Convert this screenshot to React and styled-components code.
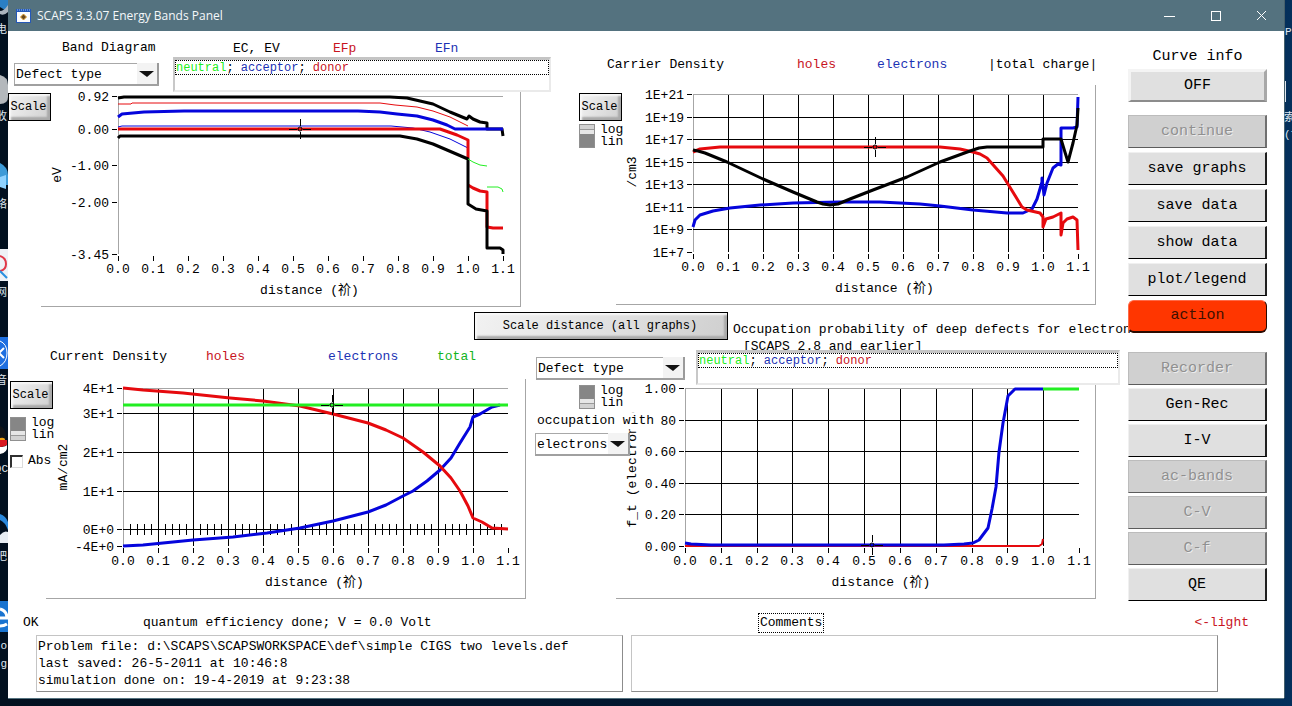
import React from "react";
import styled, { createGlobalStyle, css } from "styled-components";

// Colors declaration
const colors = {
  titleBar: "#54727f",
  line: "#a6a6a6",
  black: "#000000",
  red: "#e60a0e",
  blue: "#0505dc",
  green: "#22ee22",
  textRed: "#c8141e",
  textBlue: "#1c32b4",
  textGreen: "#14b41e",
  face: "#e0e0e0",
  dimmed: "#d0d0d0"
};

const mono = `"Liberation Mono", "Noto Sans CJK SC", monospace`;

const GlobalStyle = createGlobalStyle`
  * {
    box-sizing: border-box;
  }
  body {
    margin: 0;
    background: #021a38;
    font-family: ${mono};
    font-size: 13px;
    line-height: 16px;
    color: ${colors.black};
  }
  button, select, textarea, input {
    font: inherit;
    color: inherit;
    margin: 0;
    border-radius: 0;
  }
`;

// Desktop and window
const Desktop = styled.div`
  display: grid;
  grid-template-columns: 8px minmax(0, 1fr) 8px;
  min-height: 100vh;
  padding-bottom: 7px;
  background: linear-gradient(90deg, #02101f, #021c3a 80%, #04305c);
`;

const Strip = styled.svg`
  display: block;
  width: 8px;
  height: 698px;
  overflow: hidden;
`;

const Window = styled.div`
  display: flex;
  flex-direction: column;
  background: #ffffff;
  border-bottom: 1px solid ${colors.titleBar};
`;

const TitleBar = styled.header`
  display: flex;
  align-items: center;
  height: 31px;
  padding-left: 8px;
  background: ${colors.titleBar};
  color: #f4f8fa;
  font-family: "Open Sans", "Noto Sans", sans-serif;
  font-size: 12px;
`;

const TitleText = styled.span`
  flex: 1;
  margin-left: 6px;
`;

const WindowButton = styled.button`
  display: flex;
  align-items: center;
  justify-content: center;
  width: 46px;
  height: 31px;
  padding: 0;
  border: 0;
  background: none;
  color: #ffffff;
`;

const Body = styled.div`
  display: flex;
`;

const Main = styled.main`
  flex: 1;
  min-width: 0;
`;

const Row = styled.div`
  display: grid;
  grid-template-columns: ${p => p.$cols};
`;

const DistanceRow = styled(Row)`
  height: 41px;
`;

// Chart panels
const PanelHead = styled.div`
  display: flex;
  height: ${p => p.$height}px;
`;

const TitleColumn = styled.div`
  display: flex;
  flex-direction: column;
  gap: 7px;
  width: 165px;
  padding: 9px 0 0 6px;
`;

const PanelTitle = styled.h2`
  margin: 0;
  padding-left: ${p => p.$indent || 0}px;
  font-size: 13px;
  font-weight: normal;
  white-space: nowrap;
`;

const LegendColumn = styled.div`
  width: 378px;
  padding-top: 10px;
`;

const Legend = styled.div`
  display: grid;
  grid-template-columns: ${p => p.$cols};
  align-content: start;
  padding: ${p => p.$pad};
  white-space: nowrap;
`;

const DistanceTitle = styled(Legend)`
  line-height: 17px;
`;

const Ink = styled.span`
  color: ${p => p.$color};
`;

const PanelBody = styled.div`
  display: flex;
`;

const Tools = styled.div`
  position: relative;
  z-index: 1;
  display: flex;
  flex: none;
  flex-direction: column;
  align-items: flex-start;
  gap: ${p => p.$gap}px;
  width: ${p => p.$width}px;
  height: 0;
  padding: ${p => p.$pad};
`;

const Plot = styled.svg`
  display: block;
  flex: none;
  border-right: 1px solid ${colors.line};
  border-bottom: 1px solid ${colors.line};
  font-family: ${mono};
  font-size: 13px;
`;

// Controls
const GlossButton = styled.button`
  flex: none;
  width: ${p => p.$width || "43px"};
  height: 28px;
  margin-top: ${p => p.$top || 0}px;
  padding: 0 2px 0 0;
  border: 1px solid ${colors.black};
  background: linear-gradient(120deg, #f2f2f2, #dedede 60%, #cfcfcf);
  box-shadow: inset 2px 2px 2px #f8f8f8, inset -3px -3px 2px #a9a9a9;
  font-size: 12px;
`;

const ComboBox = styled.div`
  position: relative;
  flex: none;
  width: ${p => p.$width}px;
  height: 23px;
  border-bottom: 2px solid #a0a0a0;
  background: #ffffff;

  select {
    width: calc(100% - 22px);
    height: 21px;
    padding: 1px 0 0 1px;
    border: 1px solid #a8a8a8;
    border-right: 0;
    border-bottom: 0;
    background: #ffffff;
    appearance: none;
  }
  svg {
    position: absolute;
    top: 0;
    right: 0;
    pointer-events: none;
    background: #f3f3f3;
    border-right: 2px solid #9a9a9a;
  }
`;

const ListBox = styled.div`
  position: relative;
  z-index: 1;
  flex: none;
  width: ${p => p.$width}px;
  height: 35px;
  border: 2px solid #eaeaea;
  border-top: 3px solid #c4c4c4;
  border-left-color: #c8c8c8;
  background: #ffffff;
  font-size: 12px;
  line-height: 14px;
`;

const ListRow = styled.div`
  height: 15px;
  border: 1px dotted ${colors.black};
  white-space: pre;
`;

const SwitchBox = styled.button`
  display: flex;
  gap: 5px;
  margin-left: ${p => p.$indent || 0}px;
  padding: 0;
  border: 0;
  background: none;
  text-align: left;
  line-height: 12px;
`;

const Knob = styled.span`
  width: 16px;
  height: 24px;
  border: 1px solid #909090;
  background: linear-gradient(
    ${p => (p.$up ? "0deg" : "180deg")},
    #868686 13px,
    #e6e6e6 13px,
    #e6e6e6 17px,
    #9a9a9a 17px,
    #9a9a9a 18px,
    #d2d2d2 18px
  );
`;

const CheckLabel = styled.label`
  display: flex;
  align-items: center;
  gap: 5px;
  margin-top: 4px;

  input {
    width: 13px;
    height: 13px;
    border: 1px solid #dcdcdc;
    border-top: 2px solid #303030;
    border-left: 2px solid #303030;
    background: #ffffff;
    appearance: none;
  }
`;

const Caption = styled.label`
  margin-left: 2px;
  padding-right: 6px;
  background: #ffffff;
  white-space: nowrap;
`;

// Right hand button column
const Sidebar = styled.aside`
  position: relative;
  z-index: 2;
  width: 156px;
  padding: 18px 17px 0 0;
  font-size: 15px;
`;

const SidebarTitle = styled.div`
  margin-bottom: 4px;
  text-align: center;
`;

const ButtonGroup = styled.div`
  display: grid;
  gap: ${p => p.$gap}px;
  margin-bottom: ${p => p.$after}px;
`;

const raised = css`
  border: 3px solid #f4f4f4;
  border-right-color: #a8a8a8;
  border-bottom: 2px solid #8c8c8c;
`;

const action = css`
  border: 1px solid #2a0a00;
  border-top-color: #ff6a48;
  border-left-color: #ff6a48;
  border-bottom-width: 2px;
  border-radius: 6px;
  background: #ff3600;
  color: #401000;
`;

const SideButton = styled.button`
  height: 33px;
  padding: 0;
  border: 1px solid #f0f0f0;
  border-right: 2px solid #202020;
  border-bottom: 1px solid ${colors.black};
  background: ${colors.face};

  &:disabled {
    border-color: #bcbcbc #707070 #5c5c5c #bcbcbc;
    background: ${colors.dimmed};
    color: #909090;
    text-shadow: 1px 1px 0 #ececec;
  }
  ${p => p.$kind === "raised" && raised}
  ${p => p.$kind === "action" && action}
`;

// Bottom area
const Footer = styled.footer`
  padding: 12px 0 5px;
`;

const Status = styled.div`
  display: grid;
  grid-template-columns: 120fr 615fr 491fr;
  align-items: center;
  height: 20px;
  padding: 0 35px 0 15px;
`;

const StatusEnd = styled.div`
  display: flex;
  align-items: center;
  justify-content: space-between;
`;

const CommentsLabel = styled.label`
  padding: 1px;
  border: 1px dotted ${colors.black};
`;

const Boxes = styled.div`
  display: grid;
  grid-template-columns: 1fr 1fr;
  gap: 8px;
  padding: 2px 66px 0 28px;
`;

const TextBox = styled.textarea`
  display: block;
  width: 100%;
  height: 57px;
  padding: 2px 1px;
  border: 1px solid #c4c4c4;
  border-right-color: #8c8c8c;
  border-bottom-color: #8c8c8c;
  line-height: 17px;
  overflow: hidden;
  resize: none;
`;

const xLabels = [
  "0.0", "0.1", "0.2", "0.3", "0.4", "0.5",
  "0.6", "0.7", "0.8", "0.9", "1.0", "1.1"
];

// Curves are polylines measured from the top left corner of the plot area
const bandCurves = [
  ["black", 3, "0,2 6,1 272,1 289,2 302,5 315,8 332,16 349,23 351,20 355,23 362,26 369,27 369,33 384,33 385,40"],
  ["red", 1, "0,8 13,8 14,7 262,7 277,9 299,11 315,15 332,21 350,30"],
  ["blue", 1, "0,31 4,30 273,30 295,32 312,36 332,43 350,52"],
  ["red", 3, "0,33 322,33 339,39 350,44 350,62"],
  ["blue", 3, "0,21 4,18 15,17 26,16 66,15 240,15 262,16 279,18 299,20 315,24 329,29 337,33 385,33"],
  ["red", 3, "350,89 355,92 362,95 369,96 369,131 375,132 385,132"],
  ["black", 3, "0,42 2,40 282,40 299,43 315,48 329,54 350,63 350,108 358,113 369,115 369,152 382,152 385,154 385,158"],
  ["green", 1, "350,63 355,66 362,69 369,70"],
  ["green", 1, "369,91 380,91 384,93 385,96"]
];

const carrierCurves = [
  ["blue", 3, "0,133 2,126 7,121 20,117 37,114 67,111 100,109 147,108 187,108 227,110 247,112 280,116 314,119 330,119 339,115 344,105 349,88 349,84 351,101 354,89 360,74 365,70 368,71 368,34 380,34 384,33 385,3"],
  ["red", 3, "0,58 7,55 27,53 247,53 267,55 280,58 287,60 294,64 302,73 310,82 318,95 329,113 334,116 347,119 350,123 350,133 353,125 360,123 368,119 368,141 370,129 374,125 380,123 384,126 385,156"],
  ["black", 3, "0,56 5,57 12,59 34,68 70,85 100,98 124,108 130,110 137,111 145,110 157,105 180,96 214,83 247,68 277,57 286,54 294,53 350,53 350,45 368,45 371,55 375,68 380,49 384,31 385,14"]
];

const currentCurves = [
  ["blue", 3, "0,158 20,157 70,152 110,149 144,145 177,140 210,133 245,124 263,117 280,108 290,103 304,93 317,82 328,70 337,55 347,39 350,29 357,26 369,19 377,17"],
  ["red", 3, "0,0 20,2 60,5 107,10 140,13 177,18 210,26 245,35 263,42 280,50 300,64 317,78 328,90 337,103 345,118 350,130 359,134 369,140 385,141"],
  ["green", 3, "0,17 385,17"]
];

const occupationCurves = [
  ["red", 2, "0,158 354,158 357,156 358,151"],
  ["blue", 3, "0,155 6,156 26,157 259,157 279,156 288,155 294,152 303,140 307,121 311,99 314,64 318,35 323,8 330,1 358,1"],
  ["green", 3, "358,1 394,1"]
];

const Chart = ({
  name, height, left, top, width, yTicks, unit, unitX, unitY, curves, cursor,
  grid, minorAt
}) => {
  const step = i => Math.round((i * width) / 11);
  const bottom = 158;

  return (
    <Plot width="480" height={height} role="img" aria-label={name}>
      <g transform={`translate(${left} ${top})`}>
        <path
          d={`M0,${bottom}V0H${width}`}
          fill="none"
          stroke={colors.line}
          shapeRendering="crispEdges"
        />
        {xLabels.map((label, i) => (
          <g key={label}>
            {grid && i > 0 && i < 11 && (
              <path
                d={`M${step(i)},1V${bottom}`}
                stroke="#000"
                shapeRendering="crispEdges"
              />
            )}
            <path
              d={`M${step(i)},${bottom + 2}v5`}
              stroke="#000"
              shapeRendering="crispEdges"
            />
            <text x={step(i)} y={bottom + 19} textAnchor="middle">
              {label}
            </text>
          </g>
        ))}
        {yTicks.map(([label, y]) => (
          <g key={label}>
            {grid && y > 0 && y < bottom && (
              <path
                d={`M0,${y}H${width}`}
                stroke="#000"
                shapeRendering="crispEdges"
              />
            )}
            <path d={`M-6,${y}h5`} stroke="#000" shapeRendering="crispEdges" />
            <text x="-9" y={y + 5} textAnchor="end">
              {label}
            </text>
          </g>
        ))}
        {minorAt && (
          <path
            d={Array.from(
              { length: 54 },
              (_, i) => `M${(i + 1) * 7},${minorAt - 5}v11`
            ).join("")}
            stroke="#000"
            shapeRendering="crispEdges"
          />
        )}
        {curves.map(([color, weight, points], i) => (
          <polyline
            key={i}
            points={points}
            fill="none"
            stroke={colors[color]}
            strokeWidth={weight}
            strokeLinejoin="round"
          />
        ))}
        <g transform={`translate(${cursor})`} stroke="#000" fill="none">
          <path d="M-11,0h8M3,0h8M0,-10v7M0,3v7" shapeRendering="crispEdges" />
          <circle r="2" />
        </g>
        <text x={width / 2 - 1} y={bottom + 40} textAnchor="middle">
          distance (祄)
        </text>
      </g>
      <text
        transform={`translate(${unitX} ${unitY}) rotate(-90)`}
        textAnchor="middle"
      >
        {unit}
      </text>
    </Plot>
  );
};

const Combo = ({ width, label, id, options }) => (
  <ComboBox $width={width}>
    <select id={id} aria-label={label}>
      {options.map(option => (
        <option key={option}>{option}</option>
      ))}
    </select>
    <svg width="22" height="21" viewBox="0 0 20 21" aria-hidden="true">
      <path d="M2,8h15l-7,6z" fill="#111" />
    </svg>
  </ComboBox>
);

const DefectList = ({ width }) => (
  <ListBox $width={width} role="listbox" aria-label="Defect type legend">
    <ListRow role="option">
      <Ink $color={colors.green}>neutral</Ink>;{" "}
      <Ink $color={colors.textBlue}>acceptor</Ink>;{" "}
      <Ink $color={colors.textRed}>donor</Ink>
    </ListRow>
  </ListBox>
);

const LogSwitch = ({ log, indent }) => (
  <SwitchBox type="button" role="switch" aria-checked={!!log} $indent={indent}>
    <Knob $up={log} />
    <span>
      log
      <br />
      lin
    </span>
  </SwitchBox>
);

const LeftDesktop = () => (
  <Strip aria-hidden="true" fontSize="11" fill="#dfe6ee">
    <path d="M0,0h8v11q-4,-1 -8,-4z" fill="#2b7fc4" />
    <path d="M0,11q4,0 8,-6v7q-4,4 -8,2z" fill="#aab4be" />
    <path d="M0,75q8,2 8,10v12q0,7 -8,7z" fill="#b4b8bc" />
    <path d="M0,163q8,4 8,12v10h-8z" fill="#3d9bd8" />
    <path d="M0,177l6,-2v14l-6,-2z" fill="#8fd2ff" />
    <path d="M0,249h8v32h-8z" fill="#eef2f6" />
    <path d="M0,256q6,2 6,8t-6,7" fill="none" stroke="#e03848" strokeWidth="2" />
    <path d="M0,271l7,7" stroke="#2a90e0" strokeWidth="2" />
    <path d="M0,337h8v32h-8z" fill="#1e6fe0" />
    <path d="M0,341q7,3 7,12t-7,13" fill="none" stroke="#fff" />
    <path d="M-1,353l5,-5M-1,353l5,5" fill="none" stroke="#fff" strokeWidth="2" />
    <path d="M0,426q6,2 6,12v8q0,8 -6,8z" fill="#101418" />
    <path d="M0,438q5,-1 5,2h-5z" fill="#f0a010" />
    <path d="M0,440h7v5q-3,2 -7,2z" fill="#d81820" />
    <path d="M0,447q5,0 7,-2q1,8 -7,9z" fill="#fff" />
    <path d="M0,514q6,2 8,8v8q-3,-8 -8,-10z" fill="#2a88dc" />
    <path d="M0,535q4,-5 8,-3v11h-8z" fill="#e8eef4" />
    <path d="M0,601h8v31h-8z" fill="#1a74d0" />
    <path d="M0,609q7,2 7,9h-7M0,626q4,0 7,-2" fill="none" stroke="#fff" strokeWidth="3" />
    <text x="7" y="33" textAnchor="end">电</text>
    <text x="7" y="120" textAnchor="end">收</text>
    <text x="7" y="208" textAnchor="end">络</text>
    <text x="7" y="296" textAnchor="end">网</text>
    <text x="7" y="384" textAnchor="end">音</text>
    <text x="8" y="472" textAnchor="end">QC</text>
    <text x="7" y="560" textAnchor="end">吧</text>
    <text x="7" y="649" textAnchor="end">o</text>
    <text x="7" y="667" textAnchor="end">g</text>
  </Strip>
);

const RightDesktop = () => (
  <Strip aria-hidden="true" fontSize="11" fill="#dfe6ee">
    <path d="M0,0h1v698h-1z" fill="#46606c" />
    <path d="M1,81h1v21h-1z" fill="#dfe6ee" />
    <text x="1" y="35">P</text>
    <text x="0" y="121">索</text>
    <text x="0" y="138">(7</text>
  </Strip>
);

// Main component
const App = () => (
  <>
    <GlobalStyle />
    <Desktop>
      <LeftDesktop />
      <Window>
        <TitleBar>
          <svg width="15" height="14" aria-hidden="true">
            <rect width="15" height="14" fill="#2458b8" />
            <rect x="1" y="3" width="13" height="10" fill="#fdfdfd" />
            <path d="M1,1h13" stroke="#9cc4f4" strokeDasharray="1 1" />
            <path d="M7.500,5l3,3l-3,3l-3,-3z" fill="#6a4a20" stroke="#e0a030" />
          </svg>
          <TitleText>SCAPS 3.3.07 Energy Bands Panel</TitleText>
          <WindowButton type="button" aria-label="Minimize">
            <svg width="11" height="11" stroke="currentColor" shapeRendering="crispEdges">
              <path d="M0,6h11" />
            </svg>
          </WindowButton>
          <WindowButton type="button" aria-label="Maximize">
            <svg width="11" height="11" stroke="currentColor" fill="none" shapeRendering="crispEdges">
              <path d="M1,1h9v9h-9z" />
            </svg>
          </WindowButton>
          <WindowButton type="button" aria-label="Close">
            <svg width="11" height="11" stroke="currentColor">
              <path d="M1,1l9,9M10,1l-9,9" />
            </svg>
          </WindowButton>
        </TitleBar>
        <Body>
          <Main>
            <Row $cols="minmax(0, 563fr) minmax(0, 557fr)">
              <section>
                <PanelHead $height={60}>
                  <TitleColumn>
                    <PanelTitle $indent={48}>Band Diagram</PanelTitle>
                    <Combo width={145} label="Band defect type" options={["Defect type"]} />
                  </TitleColumn>
                  <LegendColumn>
                    <Legend $cols="100px 102px 1fr" $pad="0 0 0 60px">
                      <span>EC, EV</span>
                      <Ink $color={colors.textRed}>EFp</Ink>
                      <Ink $color={colors.textBlue}>EFn</Ink>
                    </Legend>
                    <DefectList width={378} />
                  </LegendColumn>
                </PanelHead>
                <PanelBody>
                  <Tools $width={33} $gap={4} $pad="2px 0 0">
                    <GlossButton type="button">Scale</GlossButton>
                  </Tools>
                  <Chart
                    name="Band Diagram"
                    height={216}
                    left={77}
                    top={5}
                    width={385}
                    yTicks={[["0.92", 0], ["0.00", 33], ["-1.00", 69], ["-2.00", 106], ["-3.45", 158]]}
                    unit="eV"
                    unitX={20}
                    unitY={84}
                    curves={bandCurves}
                    cursor="182 33"
                  />
                </PanelBody>
              </section>
              <section>
                <Legend $cols="190px 80px 111px 1fr" $pad="26px 0 12px 36px">
                  <PanelTitle>Carrier Density</PanelTitle>
                  <Ink $color={colors.textRed}>holes</Ink>
                  <Ink $color={colors.textBlue}>electrons</Ink>
                  <span>|total charge|</span>
                </Legend>
                <PanelBody>
                  <Tools $width={45} $gap={3} $pad="8px 0 0 8px">
                    <GlossButton type="button">Scale</GlossButton>
                    <LogSwitch log />
                  </Tools>
                  <Chart
                    name="Carrier Density"
                    height={220}
                    left={77}
                    top={9}
                    width={385}
                    yTicks={[
                      ["1E+21", 0], ["1E+19", 23], ["1E+17", 45], ["1E+15", 68],
                      ["1E+13", 90], ["1E+11", 113], ["1E+9", 135], ["1E+7", 158]
                    ]}
                    unit="/cm3"
                    unitX={20}
                    unitY={87}
                    curves={carrierCurves}
                    cursor="182 53"
                    grid
                  />
                </PanelBody>
              </section>
            </Row>
            <DistanceRow $cols="minmax(0, 466fr) minmax(0, 254fr) minmax(0, 400fr)">
              <span />
              <GlossButton type="button" $width="100%" $top={5}>
                Scale distance (all graphs)
              </GlossButton>
              <DistanceTitle $cols="1fr" $pad="14px 0 0 5px">
                <PanelTitle>Occupation probability of deep defects for electrons</PanelTitle>
                <PanelTitle $indent={10}>[SCAPS 2.8 and earlier]</PanelTitle>
              </DistanceTitle>
            </DistanceRow>
            <Row $cols="minmax(0, 527fr) minmax(0, 593fr)">
              <section>
                <Legend $cols="156px 122px 109px 1fr" $pad="1px 0 14px 42px">
                  <PanelTitle>Current Density</PanelTitle>
                  <Ink $color={colors.textRed}>holes</Ink>
                  <Ink $color={colors.textBlue}>electrons</Ink>
                  <Ink $color={colors.textGreen}>total</Ink>
                </Legend>
                <PanelBody>
                  <Tools $width={38} $gap={8} $pad="2px 0 0 2px">
                    <GlossButton type="button">Scale</GlossButton>
                    <LogSwitch />
                    <CheckLabel>
                      <input type="checkbox" />
                      Abs
                    </CheckLabel>
                  </Tools>
                  <Chart
                    name="Current Density"
                    height={220}
                    left={77}
                    top={9}
                    width={385}
                    yTicks={[["4E+1", 0], ["3E+1", 25], ["2E+1", 64], ["1E+1", 103], ["0E+0", 141], ["-4E+0", 158]]}
                    unit="mA/cm2"
                    unitX={21}
                    unitY={88}
                    curves={currentCurves}
                    cursor="209 17"
                    minorAt={141}
                    grid
                  />
                </PanelBody>
              </section>
              <section>
                <PanelHead $height={34}>
                  <Legend $cols="160px auto" $pad="2px 0 0 1px">
                    <Legend $cols="auto" $pad="7px 0 0">
                      <Combo width={149} label="Occupation defect type" options={["Defect type"]} />
                    </Legend>
                    <DefectList width={424} />
                  </Legend>
                </PanelHead>
                <PanelBody>
                  <Tools $width={81} $gap={4} $pad="3px 0 0">
                    <LogSwitch indent={44} />
                    <Caption htmlFor="occupation">occupation with</Caption>
                    <Combo id="occupation" width={95} label="occupation with" options={["electrons", "holes"]} />
                  </Tools>
                  <Chart
                    name="Occupation probability"
                    height={217}
                    left={69}
                    top={6}
                    width={394}
                    yTicks={[["1.00", 0], ["0.80", 32], ["0.60", 63], ["0.40", 95], ["0.20", 126], ["0.00", 158]]}
                    unit="f_t (electrons)"
                    unitX={20}
                    unitY={87}
                    curves={occupationCurves}
                    cursor="187 157"
                    grid
                  />
                </PanelBody>
              </section>
            </Row>
          </Main>
          <Sidebar>
            <SidebarTitle>Curve info</SidebarTitle>
            <ButtonGroup $gap={4} $after={13}>
              <SideButton type="button" $kind="raised">OFF</SideButton>
            </ButtonGroup>
            <ButtonGroup $gap={4} $after={19}>
              <SideButton type="button" disabled>continue</SideButton>
              <SideButton type="button">save graphs</SideButton>
              <SideButton type="button">save data</SideButton>
              <SideButton type="button">show data</SideButton>
              <SideButton type="button">plot/legend</SideButton>
              <SideButton type="button" $kind="action">action</SideButton>
            </ButtonGroup>
            <ButtonGroup $gap={3} $after={0}>
              <SideButton type="button" disabled>Recorder</SideButton>
              <SideButton type="button">Gen-Rec</SideButton>
              <SideButton type="button">I-V</SideButton>
              <SideButton type="button" disabled>ac-bands</SideButton>
              <SideButton type="button" disabled>C-V</SideButton>
              <SideButton type="button" disabled>C-f</SideButton>
              <SideButton type="button">QE</SideButton>
            </ButtonGroup>
          </Sidebar>
        </Body>
        <Footer>
          <Status>
            <span>OK</span>
            <span>quantum efficiency done; V = 0.0 Volt</span>
            <StatusEnd>
              <CommentsLabel htmlFor="comments">Comments</CommentsLabel>
              <Ink $color={colors.textRed}>&lt;-light</Ink>
            </StatusEnd>
          </Status>
          <Boxes>
            <TextBox
              readOnly
              aria-label="Problem info"
              defaultValue={
                "Problem file: d:\\SCAPS\\SCAPSWORKSPACE\\def\\simple CIGS two levels.def\n" +
                "last saved: 26-5-2011 at 10:46:8\n" +
                "simulation done on: 19-4-2019 at 9:23:38"
              }
            />
            <TextBox id="comments" />
          </Boxes>
        </Footer>
      </Window>
      <RightDesktop />
    </Desktop>
  </>
);

export default App;
